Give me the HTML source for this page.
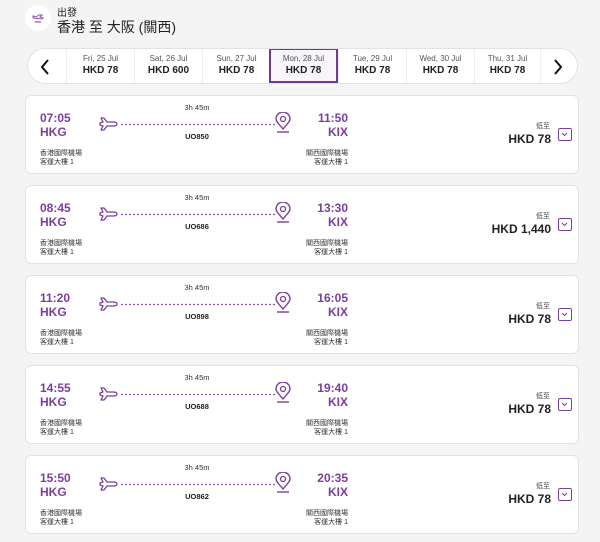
<!DOCTYPE html>
<html><head><meta charset="utf-8"><style>
*{margin:0;padding:0;box-sizing:border-box}
body{width:600px;height:542px;background:#f4f4f4;font-family:"Liberation Sans","Noto Sans CJK TC",sans-serif;position:relative;overflow:hidden;color:#222}
.ab{position:absolute}
.hic{left:25px;top:5px;width:26px;height:26px;border-radius:50%;background:#fff}
.bar{left:27px;top:48px;width:551px;height:36px;background:#fff;border:1px solid #e2e2e2;border-radius:18px;overflow:hidden}
.cell{position:absolute;top:0;height:34px;text-align:center;border-left:1px solid #eee}
.cell .d{font-size:8px;color:#555;margin-top:5px}
.cell .p{font-size:10px;font-weight:bold;margin-top:2px}
.sel{border:2px solid #6f3a97;border-top-width:1px;background:#f7f4fa}
.card{left:25px;width:554px;height:79px;background:#fff;border:1px solid #e2e2e2;border-radius:6px}
.pur{color:#7a3f9e;font-weight:bold;font-size:12px;line-height:14px}
.sm{font-size:7px;line-height:9px;color:#333}
.dur{font-size:7.5px;color:#333;width:60px;text-align:center}
.fn{font-size:7.5px;font-weight:bold;width:60px;text-align:center}
.price{right:27px;top:36px;font-size:12px;font-weight:bold}
.low{right:28px;top:25px;font-size:7px;color:#444}
.chev{left:532px;top:32px;width:14px;height:13px;border:1.5px solid #7a3f9e;border-radius:2px}
</style></head><body>
<div class="ab hic"><svg width="26" height="26" viewBox="0 0 26 26"><path d="M8 11 l3 1 l3-2 h3 l-2 2 l3 1 l-1 1 l-9 -1z" fill="none" stroke="#8a55ad" stroke-width="1"/><line x1="10" y1="17" x2="16" y2="17" stroke="#8a55ad" stroke-width="1.2"/></svg></div>
<div class="ab" style="left:57px;top:4px;font-size:10px">出發</div>
<div class="ab" style="left:57px;top:17px;font-size:14px">香港 至 大阪 (關西)</div>
<div class="ab bar">
<svg class="ab" style="left:11px;top:9px" width="12" height="18" viewBox="0 0 12 18"><path d="M9 2 L3 9 L9 16" fill="none" stroke="#111" stroke-width="2"/></svg>
<div class="cell" style="left:38px;width:68px"><div class="d">Fri, 25 Jul</div><div class="p">HKD 78</div></div>
<div class="cell" style="left:106px;width:68px"><div class="d">Sat, 26 Jul</div><div class="p">HKD 600</div></div>
<div class="cell" style="left:174px;width:68px"><div class="d">Sun, 27 Jul</div><div class="p">HKD 78</div></div>
<div class="cell sel" style="left:241px;width:69px"><div class="d" style="margin-top:4px">Mon, 28 Jul</div><div class="p">HKD 78</div></div>
<div class="cell" style="left:310px;width:68px"><div class="d">Tue, 29 Jul</div><div class="p">HKD 78</div></div>
<div class="cell" style="left:378px;width:68px"><div class="d">Wed, 30 Jul</div><div class="p">HKD 78</div></div>
<div class="cell" style="left:446px;width:66px"><div class="d">Thu, 31 Jul</div><div class="p">HKD 78</div></div>
<div class="cell" style="left:512px;width:40px"></div>
<svg class="ab" style="left:524px;top:9px" width="12" height="18" viewBox="0 0 12 18"><path d="M3 2 L9 9 L3 16" fill="none" stroke="#111" stroke-width="2"/></svg>
</div>
<div id="cards"></div>
<script>
var d=[["07:05","11:50","UO850","HKD 78"],["08:45","13:30","UO686","HKD 1,440"],["11:20","16:05","UO898","HKD 78"],["14:55","19:40","UO688","HKD 78"],["15:50","20:35","UO862","HKD 78"]];
var h="";
d.forEach(function(r,i){var t=95+i*90;
h+='<div class="ab card" style="top:'+t+'px">'+
'<div class="ab pur" style="left:14px;top:15px">'+r[0]+'<br>HKG</div>'+
'<div class="ab sm" style="left:14px;top:53px">香港國際機場<br>客運大樓 1</div>'+
'<svg class="ab" style="left:73px;top:19px" width="20" height="18" viewBox="0 0 20 18"><path d="M2 3 h3 l3 4 h6 c3 0 4 1 4 2 c0 1 -1 2 -4 2 h-6 l-3 4 h-3 l2-4 l-3-1 v-2 l3-1z" fill="none" stroke="#7a3f9e" stroke-width="1.3" stroke-linejoin="round"/></svg>'+
'<svg class="ab" style="left:95px;top:27px" width="154" height="3"><line x1="0" y1="1.5" x2="154" y2="1.5" stroke="#8a55ad" stroke-width="1.2" stroke-dasharray="2 2"/></svg>'+
'<svg class="ab" style="left:248px;top:16px" width="18" height="22" viewBox="0 0 18 22"><path d="M9 17 c-3-4 -7-7 -7-10 a7 7 0 0 1 14 0 c0 3 -4 6 -7 10z" fill="none" stroke="#7a3f9e" stroke-width="1.4"/><circle cx="9" cy="7" r="2.5" fill="none" stroke="#7a3f9e" stroke-width="1.3"/><path d="M3 20 h12" stroke="#7a3f9e" stroke-width="1.4"/></svg>'+
'<div class="ab dur" style="left:141px;top:7px">3h 45m</div>'+
'<div class="ab fn" style="left:141px;top:36px">'+r[2]+'</div>'+
'<div class="ab pur" style="right:230px;top:15px;text-align:right">'+r[1]+'<br>KIX</div>'+
'<div class="ab sm" style="right:230px;top:53px;text-align:right">關西國際機場<br>客運大樓 1</div>'+
'<div class="ab low">低至</div><div class="ab price">'+r[3]+'</div>'+
'<div class="ab chev"><svg width="11" height="10" viewBox="0 0 11 10" style="display:block"><path d="M3 4 l2.5 2.5 l2.5-2.5" fill="none" stroke="#7a3f9e" stroke-width="1"/></svg></div>'+
'</div>';});
document.getElementById("cards").innerHTML=h;
</script>
</body></html>
